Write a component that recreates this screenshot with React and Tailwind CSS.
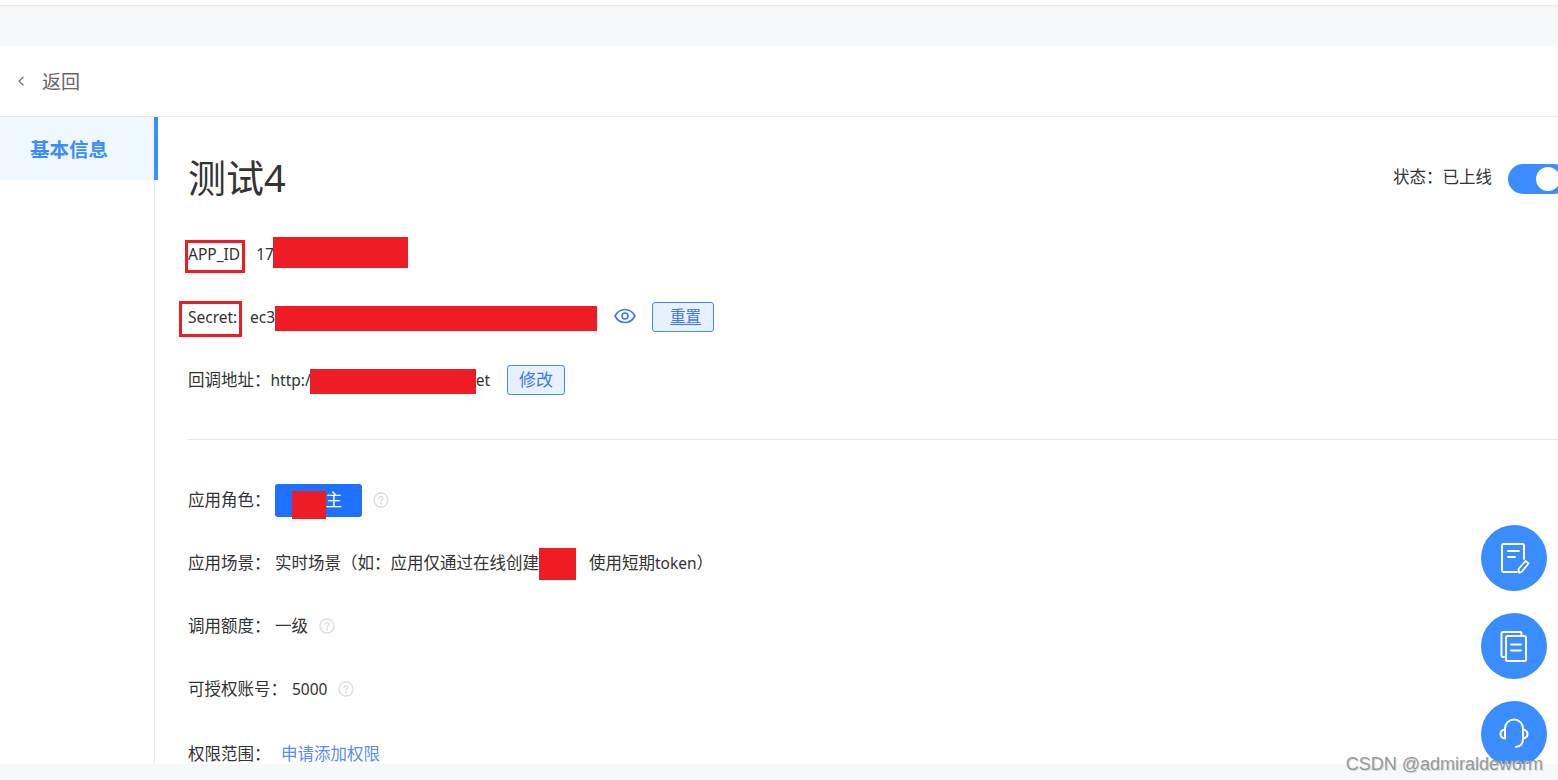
const FONT = "font-['Noto_Sans','Noto_Sans_CJK_SC',sans-serif]"

function Help() {
  return (
    <svg width="16" height="16" viewBox="0 0 16 16" fill="none" stroke="#dcdcdc" strokeWidth="1.3" className="mb-[2px] shrink-0">
      <circle cx="8" cy="8" r="7" />
      <path d="M6.1 6.4c0-1.1.8-1.8 1.9-1.8s1.9.7 1.9 1.7c0 1.4-1.9 1.5-1.9 2.9" strokeLinecap="round" />
      <circle cx="8" cy="11.4" r=".5" fill="#dcdcdc" />
    </svg>
  )
}

function Redact({ className }) {
  return <span className={`inline-block shrink-0 bg-[#ee1c25] ${className}`} />
}

function Row({ children }) {
  return <div className="flex h-[63px] items-center whitespace-nowrap">{children}</div>
}

function OutlineButton({ className, children }) {
  return (
    <button className={`flex h-[30px] items-center justify-center rounded-[3px] border border-[#3a8cff] bg-[#e8f1ff] text-[#3f78ee] ${className}`}>
      {children}
    </button>
  )
}

function FloatButton({ children }) {
  return (
    <div className="flex h-[66px] w-[66px] items-center justify-center rounded-full bg-[#3a8cff]">
      <svg width="34" height="34" viewBox="0 0 34 34" fill="none" stroke="white" strokeWidth="2" strokeLinecap="round" strokeLinejoin="round">
        {children}
      </svg>
    </div>
  )
}

export default function App() {
  return (
    <div className={`relative flex h-[780px] w-full flex-col overflow-hidden bg-white text-[16.5px] text-[#333] ${FONT}`}>
      {/* top strip */}
      <div className="h-[6px] shrink-0 border-b border-[#e8e8e8] bg-white" />
      <div className="h-[40px] shrink-0 bg-[#f7f8fa]" />

      {/* back header */}
      <div className="flex h-[71px] shrink-0 items-center border-b border-[#e8e8e8] pt-[3px] text-[19px] text-[#666]">
        <svg width="10" height="14" viewBox="0 0 10 14" fill="none" stroke="#777" strokeWidth="1.3" className="ml-[16px] mb-[4px]">
          <path d="M7.5 3 3 7.200l4.500 4" />
        </svg>
        <span className="ml-[16px]">返回</span>
      </div>

      <div className="relative flex h-[647px] shrink-0 overflow-hidden">
        {/* sidebar */}
        <aside className="w-[155px] shrink-0 border-r border-[#e8e8e8]">
          <div className="flex h-[63px] w-[158px] items-center border-r-4 border-[#3a8cff] bg-[#eff7ff] pt-[2px] pl-[30px] text-[19.500px] font-bold text-[#3a8cff]">
            基本信息
          </div>
        </aside>

        {/* content */}
        <main className="min-w-0 flex-1 pl-[33px]">
          <div className="flex h-[106px] items-start justify-between pt-[33px]">
            <h1 className="-translate-y-[1px] text-[38px] leading-[56px] font-normal text-[#333]">测试4</h1>
            <div className="flex shrink-0 translate-x-[10px] items-center pt-[14px]">
              <span className="-translate-y-[2px]">状态：已上线</span>
              <span className="ml-[16px] flex h-[30px] w-[60px] items-center rounded-full bg-[#3a8cff] pl-[28px]">
                <span className="h-[24px] w-[24px] rounded-full bg-white" />
              </span>
            </div>
          </div>

          <Row>
            <span className="relative text-[15.500px]">
              APP_ID
              <span className="absolute -top-[3px] -right-[5px] -bottom-[7px] -left-[3px] border-[3px] border-[#ee1c25]" />
            </span>
            <span className="ml-[16px] text-[15.500px]">17</span>
            <Redact className="mb-[5px] -ml-[1px] h-[31px] w-[135px]" />
          </Row>

          <Row>
            <span className="relative w-[53px] text-[15.500px]">
              Secret:
              <span className="absolute -top-[5px] -right-[1px] -bottom-[8px] -left-[9px] border-[3px] border-[#ee1c25]" />
            </span>
            <span className="ml-[9px] text-[15.500px]">ec3</span>
            <Redact className="mt-[1px] h-[25px] w-[322px]" />
            <svg width="24" height="18" viewBox="0 0 24 18" fill="none" stroke="#3f78ee" strokeWidth="1.6" className="mb-[3px] ml-[16px]">
              <path d="M2 9c2.500-4.500 6-6.500 10-6.500S19.500 4.500 22 9c-2.500 4.500-6 6.500-10 6.500S4.500 13.500 2 9Z" />
              <circle cx="12" cy="9" r="3" />
            </svg>
            <OutlineButton className="mb-[1px] ml-[15px] w-[62px] pl-[5px] text-[15.500px] underline underline-offset-2">重置</OutlineButton>
          </Row>

          <Row>
            <span>回调地址：</span>
            <span className="text-[15.500px]">http:/</span>
            <Redact className="mt-[1px] -ml-[1px] h-[25px] w-[166px]" />
            <span className="text-[15.500px]">et</span>
            <OutlineButton className="mb-[1px] ml-[17px] w-[58px] text-[17px]">修改</OutlineButton>
          </Row>

          <div className="mt-[27px] mb-[29px] h-px bg-[#e4e6ec]" />

          <Row>
            <span>应用角色：</span>
            <span className="relative mb-[1px] ml-[4.500px] flex h-[33px] w-[87px] items-center justify-end rounded-[3px] bg-[#2070ff] pr-[20px] text-white">
              主
              <span className="absolute top-[7px] left-[17px] h-[28px] w-[34px] bg-[#ee1c25]" />
            </span>
            <span className="ml-[11px]"><Help /></span>
          </Row>

          <Row>
            <span>应用场景：</span>
            <span className="ml-[4.500px]">实时场景（如：应用仅通过在线创建</span>
            <Redact className="h-[32px] w-[37px]" />
            <span className="ml-[13px]">使用短期<span className="text-[15.500px]">token</span>）</span>
          </Row>

          <Row>
            <span>调用额度：</span>
            <span className="ml-[4.500px]">一级</span>
            <span className="ml-[11px]"><Help /></span>
          </Row>

          <Row>
            <span>可授权账号：</span>
            <span className="ml-[5px] text-[15.500px]">5000</span>
            <span className="ml-[11px]"><Help /></span>
          </Row>

          <Row>
            <span className="translate-y-[2px]">权限范围：</span>
            <span className="ml-[10.500px] translate-y-[2px] text-[#5a8cf5]">申请添加权限</span>
          </Row>
        </main>

        {/* floating actions */}
        <div className="absolute top-[408px] right-[11px] flex flex-col gap-[22px]">
          <FloatButton>
            <path d="M20 31H6.500A1.500 1.500 0 0 1 5 29.500V4.500A1.500 1.500 0 0 1 6.500 3h19A1.500 1.500 0 0 1 27 4.500V18" />
            <path d="M11 10h11M11 16h7" />
            <path d="m22 31.500 -.5 -3.500 7 -8 3 2.500 -7 8.500Z" strokeWidth="1.800" />
          </FloatButton>
          <FloatButton>
            <path d="M7 28H6a1.500 1.500 0 0 1-1.500-1.500v-22A1.500 1.500 0 0 1 6 3h17a1.500 1.500 0 0 1 1.500 1.500V7" />
            <rect x="9" y="7" width="20" height="25" rx="1.500" />
            <path d="M14 15.500h10M14 21.500h10" />
          </FloatButton>
          <FloatButton>
            <path d="M8 14v-2.500a9 9 0 0 1 18 0V14" />
            <path d="M8 12.500C5 13 3.500 15 3.500 17S5 21 8 21.500Z" />
            <path d="M26 12.500c3 .5 4.500 2.500 4.500 4.500s-1.500 4-4.500 4.500Z" />
            <path d="M26 21.500c0 5-2.500 8-7 8.500" />
          </FloatButton>
        </div>
      </div>

      {/* bottom strip */}
      <div className="relative z-10 flex-1 bg-[#f7f8fa]" />

      {/* watermark */}
      <span className="absolute right-[15px] bottom-[5px] z-20 font-['Liberation_Sans',sans-serif] text-[18px] leading-[22px] text-[#999] [text-shadow:1px_1px_0_#d8d8d8]">
        CSDN @admiraldeworm
      </span>
    </div>
  )
}
